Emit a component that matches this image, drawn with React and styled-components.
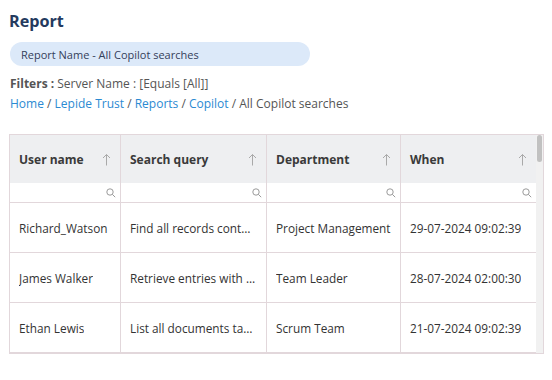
import styled, { createGlobalStyle } from "styled-components";

const GlobalStyle = createGlobalStyle`
  body {
    margin: 0;
    background: #fff;
    font-family: "Open Sans", "Liberation Sans", sans-serif;
    color: #333;
  }
`;

const Page = styled.div`
  padding: 8px 9px 0 9px;
  width: 552px;
  box-sizing: border-box;
`;

const Title = styled.h1`
  margin: 0;
  font-size: 16.2px;
  line-height: 26px;
  font-weight: 700;
  color: #243a5e;
`;

const Pill = styled.div`
  margin: 8px 0 0 1px;
  width: 300px;
  height: 24px;
  box-sizing: border-box;
  border-radius: 12px;
  background: #dce9f9;
  padding-left: 11px;
  display: flex;
  align-items: center;
  font-size: 11px;
  color: #34405a;
`;

const Line = styled.div`
  margin-top: ${(p) => p.$top}px;
  padding-left: 1px;
  font-size: 12px;
  line-height: 18px;
  color: #555;
`;

const Bold = styled.b`
  font-weight: 700;
  color: #555;
`;

const Crumb = styled.a`
  color: #2b8ad2;
  text-decoration: none;
`;

const TableBox = styled.div`
  margin-top: 21px;
  width: 535px;
  border: 1px solid #e2d7db;
  display: flex;
  box-sizing: border-box;
`;

const Grid = styled.div`
  flex: 1;
  display: grid;
  grid-template-columns: 111px 146px 134px 135px;
`;

const HeadCell = styled.div`
  height: 48px;
  background: #eeeff1;
  border-right: ${(p) => (p.$last ? "none" : "1px solid #e2d7db")};
  display: flex;
  align-items: center;
  justify-content: space-between;
  padding: 0 9px 0 9px;
  font-size: 12px;
  font-weight: 700;
  color: #3a3a3a;
  box-sizing: border-box;
`;

const FilterCell = styled.div`
  height: 20px;
  border-right: ${(p) => (p.$last ? "none" : "1px solid #e2d7db")};
  border-bottom: 1px solid #e2d7db;
  display: flex;
  align-items: center;
  justify-content: flex-end;
  padding-right: 4px;
  box-sizing: border-box;
`;

const Cell = styled.div`
  height: 50px;
  border-right: ${(p) => (p.$last ? "none" : "1px solid #e2d7db")};
  border-bottom: 1px solid #e2d7db;
  display: flex;
  align-items: center;
  padding: 0 6px 0 9px;
  font-size: 11.8px;
  color: #333;
  box-sizing: border-box;
  min-width: 0;
  white-space: nowrap;
`;

const Clip = styled.span`
  overflow: hidden;
  text-overflow: ellipsis;
  max-width: ${(p) => p.$max}px;
`;

const Track = styled.div`
  width: 7px;
  background: #f1f1f1;
  display: flex;
  flex-direction: column;
`;

const Thumb = styled.div`
  height: 27px;
  margin: 0 1px;
  border-radius: 3px;
  background: #c1c1c1;
`;

const SortArrow = () => (
  <svg width="9" height="13" viewBox="0 0 9 13" fill="none" stroke="#a9a9a9" strokeWidth="1">
    <path d="M4.5 1.5V12.5M1 5L4.5 1.5L8 5" />
  </svg>
);

const SearchIcon = () => (
  <svg width="10" height="10" viewBox="0 0 10 10" fill="none" stroke="#8f8f8f" strokeWidth="0.9">
    <circle cx="4" cy="4" r="3.2" />
    <path d="M6.4 6.4L9.2 9.2" />
  </svg>
);

const columns = ["User name", "Search query", "Department", "When"];

const rows = [
  ["Richard_Watson", "Find all records containing project data", "Project Management", "29-07-2024 09:02:39"],
  ["James Walker", "Retrieve entries with status pending", "Team Leader", "28-07-2024 02:00:30"],
  ["Ethan Lewis", "List all documents tagged confidential", "Scrum Team", "21-07-2024 09:02:39"],
];

export default function App() {
  return (
    <>
      <GlobalStyle />
      <Page>
        <Title>Report</Title>
        <Pill>Report Name - All Copilot searches</Pill>
        <Line $top={9}>
          <Bold>Filters :</Bold> Server Name : [Equals [All]]
        </Line>
        <Line $top={2}>
          <Crumb href="#">Home</Crumb> / <Crumb href="#">Lepide Trust</Crumb> /{" "}
          <Crumb href="#">Reports</Crumb> / <Crumb href="#">Copilot</Crumb> / All Copilot searches
        </Line>
        <TableBox>
          <Grid>
            {columns.map((c, i) => (
              <HeadCell key={c} $last={i === columns.length - 1}>
                {c}
                <SortArrow />
              </HeadCell>
            ))}
            {columns.map((c, i) => (
              <FilterCell key={c} $last={i === columns.length - 1}>
                <SearchIcon />
              </FilterCell>
            ))}
            {rows.map((r) =>
              r.map((v, i) => (
                <Cell key={r[0] + i} $last={i === r.length - 1}>
                  <Clip $max={i === 1 ? 126 : 200}>{v}</Clip>
                </Cell>
              ))
            )}
          </Grid>
          <Track>
            <Thumb />
          </Track>
        </TableBox>
      </Page>
    </>
  );
}
